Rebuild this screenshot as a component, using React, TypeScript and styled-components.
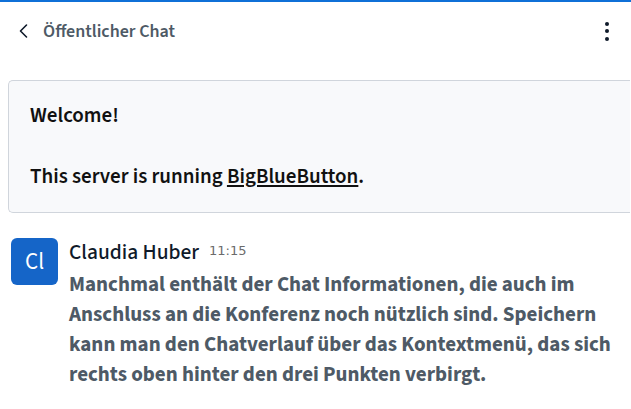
import React from 'react';
import styled, { createGlobalStyle } from 'styled-components';

const GlobalStyle = createGlobalStyle`
  html, body {
    margin: 0;
    padding: 0;
    background: #fff;
  }
  body {
    font-family: "Source Sans Pro", "Source Sans 3", Lato, "Noto Sans", sans-serif;
  }
`;

const Panel = styled.div`
  width: 631px;
  height: 409px;
  overflow: hidden;
  border-top: 2px solid #0f70d7;
  box-sizing: border-box;
  display: flex;
  flex-direction: column;
`;

const Header = styled.header`
  height: 56px;
  display: flex;
  align-items: center;
  justify-content: space-between;
  padding: 2px 14px 0 16px;
  box-sizing: border-box;
  flex-shrink: 0;
`;

const BackButton = styled.button`
  display: flex;
  align-items: center;
  gap: 11px;
  background: none;
  border: none;
  padding: 0;
  cursor: pointer;
  font-family: inherit;
  font-size: 18px;
  font-weight: 600;
  color: #4e5a66;
`;

const MenuButton = styled.button`
  background: none;
  border: none;
  padding: 0;
  width: 20px;
  display: flex;
  flex-direction: column;
  align-items: center;
  gap: 3.5px;
  cursor: pointer;
`;

const Dot = styled.span`
  width: 4px;
  height: 4px;
  border-radius: 50%;
  background: #0f1a2a;
`;

const Messages = styled.div`
  display: flex;
  flex-direction: column;
  padding: 22px 1px 0 8px;
`;

const WelcomeBox = styled.div`
  background: #f8f9fb;
  border: 1px solid #d0d5dc;
  border-right: none;
  border-radius: 5px 0 0 5px;
  padding: 22px 21px 22px 21px;
  height: 133px;
  box-sizing: border-box;
  font-size: 21px;
  font-weight: 600;
  color: #111;
  line-height: 25px;
  display: flex;
  flex-direction: column;
  gap: 36px;
`;

const Link = styled.a`
  color: inherit;
  text-decoration: underline;
  text-underline-offset: 2px;
`;

const MessageRow = styled.div`
  display: flex;
  gap: 11px;
  padding: 25px 0 0 3px;
`;

const Avatar = styled.div`
  width: 47px;
  height: 47px;
  flex-shrink: 0;
  border-radius: 6px;
  background: #1565c8;
  color: #fff;
  display: flex;
  align-items: center;
  justify-content: center;
  font-size: 23px;
  font-weight: 400;
`;

const Body = styled.div`
  display: flex;
  flex-direction: column;
`;

const Meta = styled.div`
  display: flex;
  align-items: baseline;
  gap: 10px;
  height: 31px;
  padding-top: 2px;
  box-sizing: border-box;
`;

const Name = styled.span`
  font-size: 21.5px;
  font-weight: 500;
  color: #0f1a2a;
  line-height: 26px;
`;

const Time = styled.span`
  font-family: "DejaVu Sans", sans-serif;
  font-size: 13px;
  color: #6b6b6b;
  position: relative;
  top: -4px;
`;

const Text = styled.p`
  margin: 0;
  font-size: 21px;
  font-weight: 700;
  color: #4e5a66;
  line-height: 30px;
  white-space: nowrap;
`;

const lines = [
  'Manchmal enthält der Chat Informationen, die auch im',
  'Anschluss an die Konferenz noch nützlich sind. Speichern',
  'kann man den Chatverlauf über das Kontextmenü, das sich',
  'rechts oben hinter den drei Punkten verbirgt.',
];

export default function App() {
  return (
    <>
      <GlobalStyle />
      <Panel>
        <Header>
          <BackButton>
            <svg width="16" height="16" viewBox="0 0 16 16" fill="none">
              <path d="M10.5 2 L4.5 8 L10.5 14" stroke="#0f1a2a" strokeWidth="1.6" strokeLinecap="round" strokeLinejoin="round" />
            </svg>
            Öffentlicher Chat
          </BackButton>
          <MenuButton aria-label="Optionen">
            <Dot />
            <Dot />
            <Dot />
          </MenuButton>
        </Header>
        <Messages>
          <WelcomeBox>
            <div>Welcome!</div>
            <div>
              This server is running <Link href="#">BigBlueButton</Link>.
            </div>
          </WelcomeBox>
          <MessageRow>
            <Avatar>Cl</Avatar>
            <Body>
              <Meta>
                <Name>Claudia Huber</Name>
                <Time>11:15</Time>
              </Meta>
              <Text>
                {lines.map((l, i) => (
                  <React.Fragment key={i}>
                    {l}
                    {i < lines.length - 1 && <br />}
                  </React.Fragment>
                ))}
              </Text>
            </Body>
          </MessageRow>
        </Messages>
      </Panel>
    </>
  );
}
